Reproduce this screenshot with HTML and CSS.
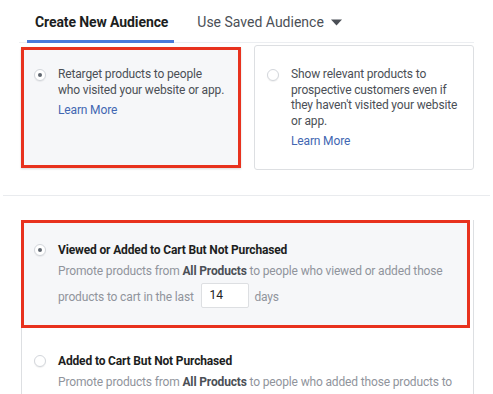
FILE: index.html
```html
<!DOCTYPE html>
<html>
<head>
<meta charset="utf-8">
<link rel="stylesheet" href="styles.css">
</head>
<body>
<div class="page">
  <div class="tabs">
    <div class="tab active">Create New Audience</div>
    <div class="tab">Use Saved Audience <svg class="caret" width="11" height="7" viewBox="0 0 11 7"><path d="M0 0.5h11L5.5 6.5z" fill="#4b4f56"/></svg></div>
  </div>
  <div class="cards">
    <div class="card card-selected">
      <span class="radio checked"></span>
      <div class="card-body">
        <div>Retarget products to people who visited your website or app.</div>
        <a class="learn learn-first">Learn More</a>
      </div>
    </div>
    <div class="card">
      <span class="radio"></span>
      <div class="card-body">
        <div>Show relevant products to prospective customers even if they haven't visited your website or app.</div>
        <a class="learn">Learn More</a>
      </div>
    </div>
  </div>
  <div class="divider"></div>
  <div class="options">
    <div class="option option-selected">
      <span class="radio checked"></span>
      <div class="option-body">
        <div class="option-title">Viewed or Added to Cart But Not Purchased</div>
        <div class="option-desc">Promote products from <b>All Products</b> to people who viewed or added those products to cart in the last <span class="num">14</span> <span class="days">days</span></div>
      </div>
    </div>
    <div class="option">
      <span class="radio"></span>
      <div class="option-body">
        <div class="option-title">Added to Cart But Not Purchased</div>
        <div class="option-desc">Promote products from <b>All Products</b> to people who added those products to cart in the last</div>
      </div>
    </div>
  </div>
</div>
</body>
</html>
```

FILE: styles.css
```css
html, body {
  margin: 0;
  padding: 0;
  background: #fff;
  overflow: hidden;
}
body {
  font-family: Roboto, "Liberation Sans", Arial, sans-serif;
  color: #4b4f56;
}
.page {
  width: 493px;
  height: 394px;
  overflow: hidden;
}
.tabs {
  display: flex;
  height: 43px;
  margin: 0 19px 0 19px;
  border-bottom: 1px solid #eceef1;
  box-sizing: border-box;
  padding-left: 8px;
  gap: 15px;
}
.tab {
  padding: 13px 8px 0;
  font-size: 14px;
  line-height: 18px;
  color: #4b4f56;
  box-sizing: border-box;
  height: 43px;
  display: flex;
  align-items: flex-start;
  gap: 7px;
}
.tab.active {
  font-weight: bold;
  color: #1c1e21;
  border-bottom: 3px solid #4a7ad9;
  padding-right: 6px;
  letter-spacing: -0.1px;
}
.caret {
  margin-top: 6px;
}
.cards {
  display: flex;
  align-items: flex-start;
  gap: 13px;
  margin: 2px 0 0 21px;
}
.card {
  width: 220px;
  height: 125px;
  box-sizing: border-box;
  border: 1px solid #dddfe2;
  border-radius: 3px;
  background: #fff;
  display: flex;
  gap: 12px;
  padding: 21px 12px 0 12px;
  font-size: 12px;
  letter-spacing: -0.15px;
  line-height: 15.7px;
  color: #4b4f56;
}
.card-selected {
  margin-top: 2px;
  height: 121px;
  border: 3px solid #e8321e;
  border-radius: 0;
  background: #f6f7f9;
  padding: 17px 12px 0 10px;
  box-shadow: 0 1px 2px rgba(0,0,0,0.15);
}
.card-body {
  flex: 1;
}
.learn {
  display: block;
  margin-top: 3px;
  color: #4267b2;
  line-height: 16px;
}
.learn-first {
  margin-top: 4px;
}
.radio {
  flex: none;
  width: 12px;
  height: 12px;
  border-radius: 50%;
  border: 1px solid #d3d6db;
  background: #fff;
  box-sizing: border-box;
  margin-top: 2px;
  display: flex;
  align-items: center;
  justify-content: center;
  box-shadow: 0 1px 1px rgba(0,0,0,0.06);
}
.radio.checked::after {
  content: "";
  width: 4px;
  height: 4px;
  border-radius: 50%;
  background: #606770;
}
.divider {
  margin: 25px 3px 0 3px;
  border-top: 1px solid #e9ebee;
}
.options {
  margin: 24px 0 0 21px;
  width: 453px;
  border-left: 1px solid #dddfe2;
  border-right: 1px solid #dddfe2;
  box-sizing: border-box;
  height: 200px;
}
.option {
  display: flex;
  gap: 12px;
  padding: 25px 12px 0 12px;
  font-size: 12px;
  letter-spacing: -0.15px;
}
.option-selected {
  margin: 2px 3px 0 -1px;
  border: 3px solid #e8321e;
  background: #f6f7f9;
  height: 108px;
  box-sizing: border-box;
  padding: 19px 10px 0 10px;
}
.option .radio {
  margin-top: 2px;
}
.option-body {
  flex: 1;
}
.option-title {
  font-weight: bold;
  color: #1c1e21;
  line-height: 16px;
}
.option-desc {
  color: #90949c;
  line-height: 26px;
}
.option-desc b {
  color: #4b4f56;
}
.num {
  display: inline-block;
  vertical-align: middle;
  width: 48px;
  height: 25px;
  box-sizing: border-box;
  border: 1px solid #dddfe2;
  border-radius: 2px;
  background: #fff;
  color: #1c1e21;
  line-height: 23px;
  padding-left: 8px;
  margin: -4px 3px 0 4px;
}
```
